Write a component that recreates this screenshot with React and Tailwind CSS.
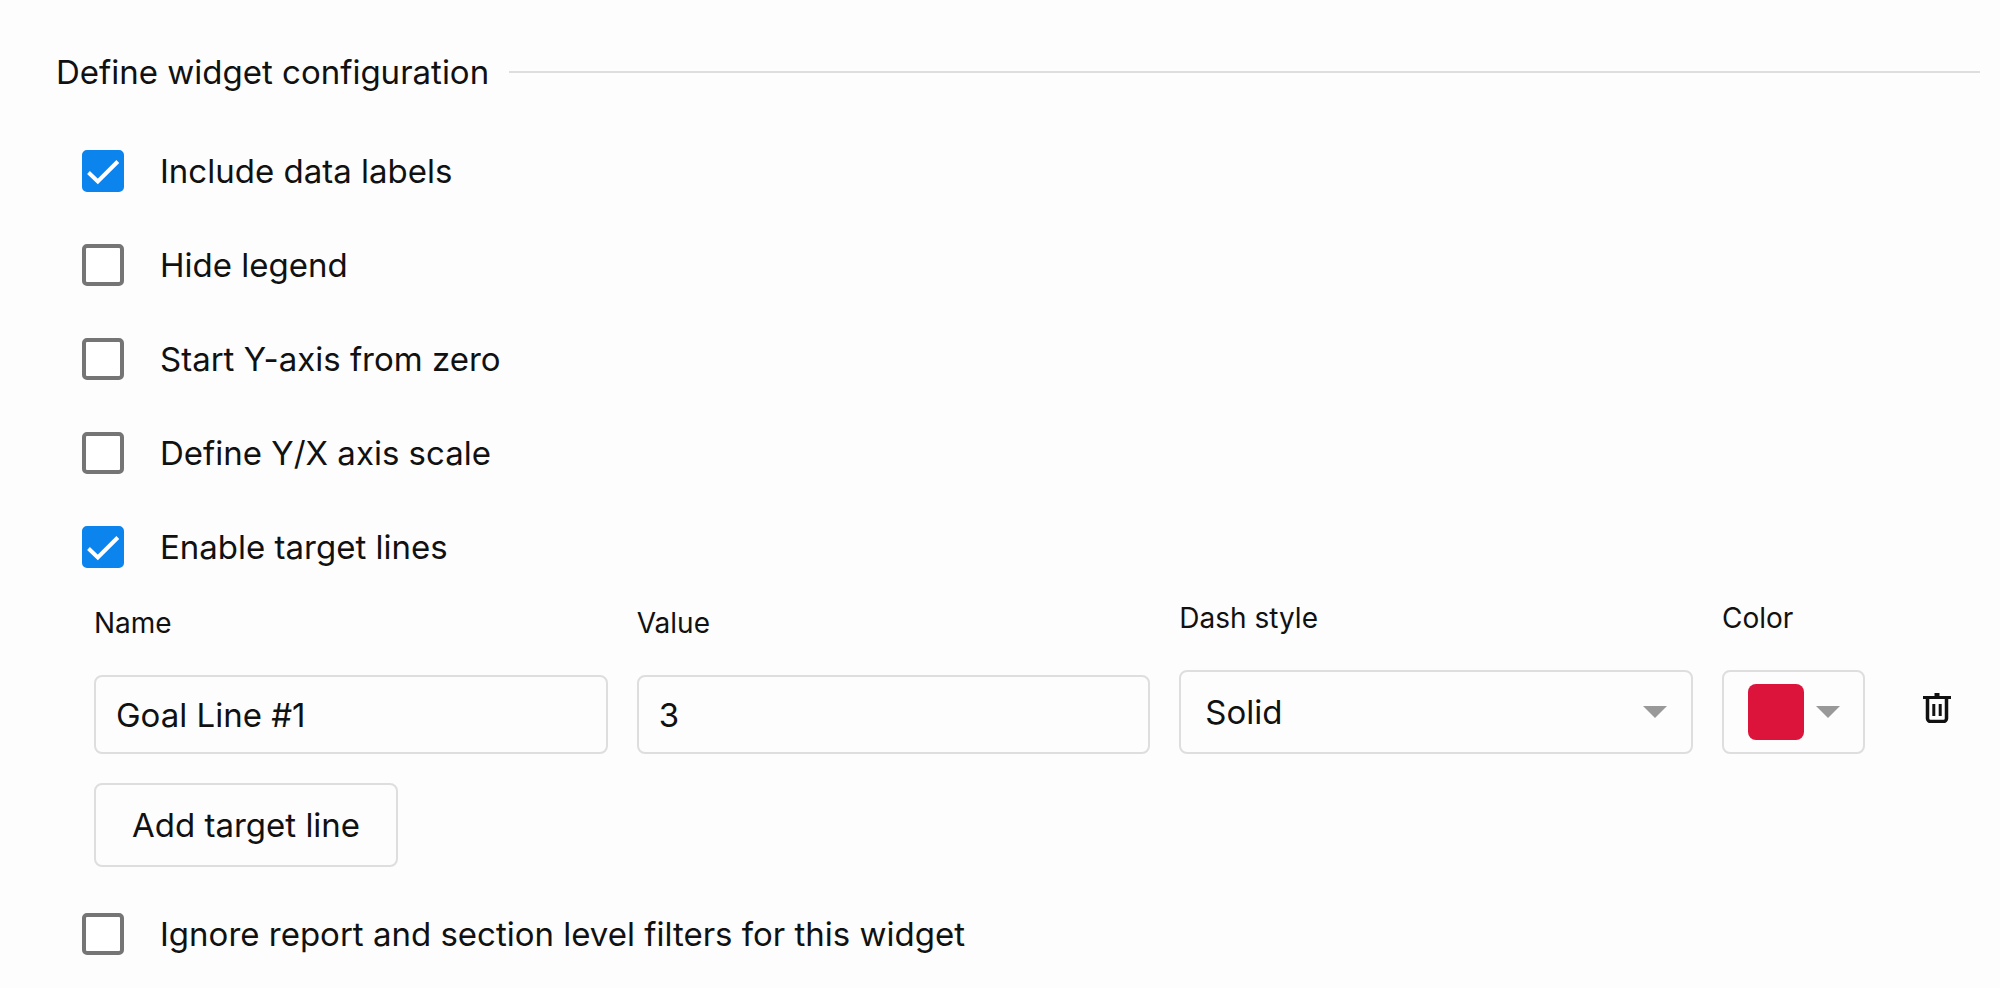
import { useState } from 'react'

const INITIAL_OPTIONS = {
  dataLabels: true,
  hideLegend: false,
  startFromZero: false,
  axisScale: false,
  targetLines: true,
  ignoreFilters: false,
}

function CheckboxRow({ label, checked, onChange }) {
  return (
    <label className="flex h-[94px] cursor-pointer items-center gap-9 text-[33px] leading-10">
      <span className="relative flex size-[42px] shrink-0">
        <input
          type="checkbox"
          checked={checked}
          onChange={onChange}
          className="size-full cursor-pointer appearance-none rounded-[5px] border-4 border-[#757575] bg-white checked:border-[#0b84ee] checked:bg-[#0b84ee]"
        />
        {checked && (
          <svg
            viewBox="0 0 42 42"
            fill="none"
            stroke="white"
            strokeWidth="4"
            className="pointer-events-none absolute inset-0 size-full"
          >
            <path d="M6.5 22.5 L15.8 31.5 L35.8 11.5" />
          </svg>
        )}
      </span>
      {label}
    </label>
  )
}

function Caret({ className = '' }) {
  return (
    <svg viewBox="0 0 24 12" fill="#999999" className={`h-3 w-6 ${className}`}>
      <path d="M0 0h24L12 12z" />
    </svg>
  )
}

function TrashIcon() {
  return (
    <svg viewBox="0 0 28 30" fill="none" stroke="currentColor" className="h-[30px] w-7">
      <path d="M0 4.5h28" strokeWidth="3" />
      <path d="M11.5 1.5h5" strokeWidth="3" />
      <path d="M4.5 4.5v21a3 3 0 0 0 3 3h13a3 3 0 0 0 3-3v-21" strokeWidth="3.5" />
      <path d="M10.8 11v12M17.2 11v12" strokeWidth="3" />
    </svg>
  )
}

export default function App() {
  const [options, setOptions] = useState(INITIAL_OPTIONS)
  const [name, setName] = useState('Goal Line #1')
  const [value, setValue] = useState('3')
  const [dash, setDash] = useState('Solid')

  function toggle(key) {
    setOptions((prev) => ({ ...prev, [key]: !prev[key] }))
  }

  return (
    <main className="min-h-screen bg-[#fdfdfd] pt-[52px] pr-5 font-['Inter',sans-serif] text-[#111111]">
      <div className="flex items-center gap-5 pl-14">
        <h2 className="text-[33px] leading-10">Define widget configuration</h2>
        <hr className="flex-1 border-t-2 border-[#dedede]" />
      </div>

      <div className="mt-8 pl-[82px]">
        <CheckboxRow
          label="Include data labels"
          checked={options.dataLabels}
          onChange={() => toggle('dataLabels')}
        />
        <CheckboxRow
          label="Hide legend"
          checked={options.hideLegend}
          onChange={() => toggle('hideLegend')}
        />
        <CheckboxRow
          label="Start Y-axis from zero"
          checked={options.startFromZero}
          onChange={() => toggle('startFromZero')}
        />
        <CheckboxRow
          label="Define Y/X axis scale"
          checked={options.axisScale}
          onChange={() => toggle('axisScale')}
        />
        <CheckboxRow
          label="Enable target lines"
          checked={options.targetLines}
          onChange={() => toggle('targetLines')}
        />

        {/* Target lines */}
        {options.targetLines && (
          <div className="mt-[6px] mb-5 pl-3">
            <div className="flex items-end gap-[29px]">
              <div className="flex min-w-0 flex-1 flex-col gap-[34px]">
                <label htmlFor="line-name" className="text-[28px] leading-9">
                  Name
                </label>
                <input
                  id="line-name"
                  type="text"
                  value={name}
                  onChange={(e) => setName(e.target.value)}
                  className="h-[79px] w-full rounded-lg border-2 border-[#dedede] px-5 text-[33px] outline-none"
                />
              </div>

              <div className="flex min-w-0 flex-1 flex-col gap-[34px]">
                <label htmlFor="line-value" className="text-[28px] leading-9">
                  Value
                </label>
                <input
                  id="line-value"
                  type="text"
                  inputMode="numeric"
                  value={value}
                  onChange={(e) => setValue(e.target.value)}
                  className="h-[79px] w-full rounded-lg border-2 border-[#dedede] px-5 text-[33px] outline-none"
                />
              </div>

              <div className="flex min-w-0 flex-1 flex-col gap-[34px]">
                <label htmlFor="line-dash" className="text-[28px] leading-9">
                  Dash style
                </label>
                <div className="relative">
                  <select
                    id="line-dash"
                    value={dash}
                    onChange={(e) => setDash(e.target.value)}
                    className="block h-[84px] w-full appearance-none rounded-lg border-2 border-[#dedede] px-6 pt-0.5 text-[33px] outline-none"
                  >
                    <option>Solid</option>
                    <option>Dash</option>
                    <option>Dot</option>
                  </select>
                  <Caret className="pointer-events-none absolute top-9 right-[26px]" />
                </div>
              </div>

              <div className="flex flex-col gap-[34px]">
                <label htmlFor="line-color" className="text-[28px] leading-9">
                  Color
                </label>
                <button
                  id="line-color"
                  type="button"
                  className="flex h-[84px] w-[143px] items-center gap-3 rounded-lg border-2 border-[#dedede] pl-6"
                >
                  <span className="size-14 rounded-lg bg-[#dc143c]" />
                  <Caret />
                </button>
              </div>

              <button
                type="button"
                aria-label="Delete target line"
                className="flex h-[90px] w-[86px] items-start justify-center pt-[29px]"
              >
                <TrashIcon />
              </button>
            </div>

            <button
              type="button"
              className="mt-[29px] h-[84px] rounded-lg border-2 border-[#dedede] px-9 pt-0.5 text-[33px]"
            >
              Add target line
            </button>
          </div>
        )}

        <CheckboxRow
          label="Ignore report and section level filters for this widget"
          checked={options.ignoreFilters}
          onChange={() => toggle('ignoreFilters')}
        />
      </div>
    </main>
  )
}
